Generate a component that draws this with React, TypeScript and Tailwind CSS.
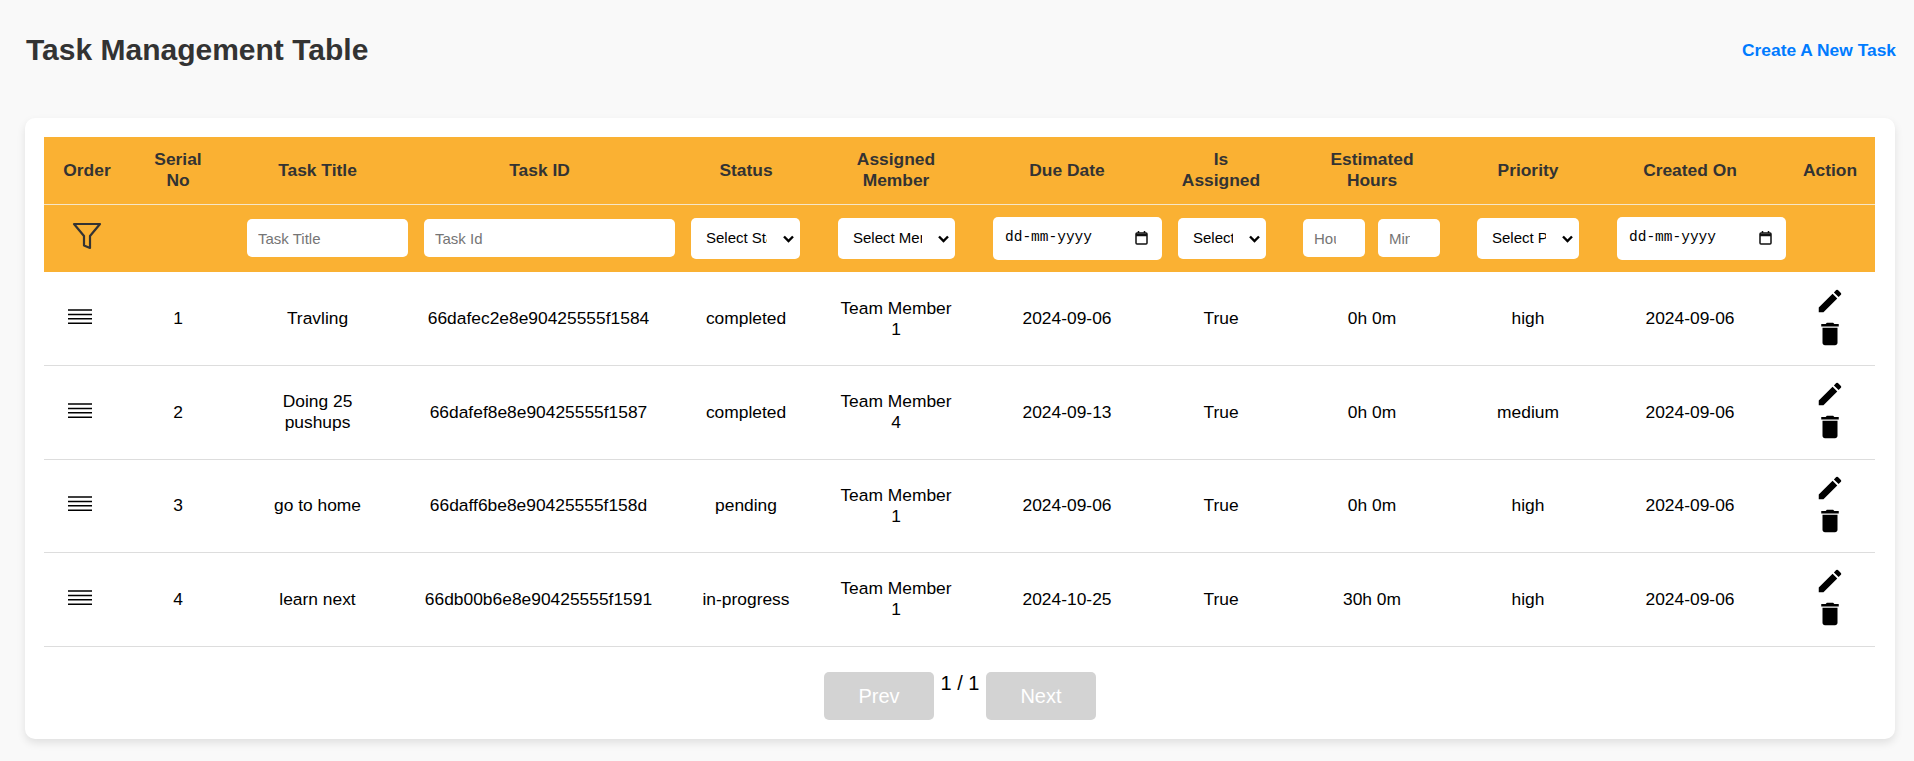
import React from 'react';
import { MdEdit, MdDelete } from 'react-icons/md';

const tasks = [
  { no: 1, title: 'Travling', id: '66dafec2e8e90425555f1584', status: 'completed', member: 'Team Member 1', due: '2024-09-06', hours: '0h 0m', priority: 'high' },
  { no: 2, title: 'Doing 25 pushups', id: '66dafef8e8e90425555f1587', status: 'completed', member: 'Team Member 4', due: '2024-09-13', hours: '0h 0m', priority: 'medium' },
  { no: 3, title: 'go to home', id: '66daff6be8e90425555f158d', status: 'pending', member: 'Team Member 1', due: '2024-09-06', hours: '0h 0m', priority: 'high' },
  { no: 4, title: 'learn next', id: '66db00b6e8e90425555f1591', status: 'in-progress', member: 'Team Member 1', due: '2024-10-25', hours: '30h 0m', priority: 'high' },
];

const inputCls = 'h-[38px] rounded-[5px] bg-white pl-[11px] text-[15px] font-normal outline-none placeholder:text-[#757575]';

const DateBox = ({ className }: { className: string }) => (
  <div className={`flex h-[43px] w-[169px] items-center justify-between rounded-[5px] bg-white pr-[14px] pl-[12px] ${className}`}>
    <span className="font-['Liberation_Mono',monospace] text-[14.5px] font-normal text-black">dd-mm-yyyy</span>
    <svg width="13" height="14" viewBox="0 0 13 14" fill="none" stroke="#111" strokeWidth="1.5">
      <rect x="1" y="2" width="11" height="11" rx="1" />
      <path d="M1 4h11" strokeWidth="2.5" />
      <path d="M3.5 0v2M9.5 0v2" />
    </svg>
  </div>
);

const FilterSelect = ({ label, className }: { label: string; className: string }) => (
  <div className={`relative ${className}`}>
    <select className="block h-[41px] w-full appearance-none rounded-[5px] bg-white pr-[33px] pl-[15px] text-[15px] font-normal text-black outline-none">
      <option>{label}</option>
    </select>
    <svg className="pointer-events-none absolute top-[17px] right-[6px]" width="11" height="8" viewBox="0 0 11 8" fill="none" stroke="#000" strokeWidth="2.4">
      <path d="M1 1.5l4.5 4.5L10 1.5" />
    </svg>
  </div>
);

const App: React.FC = () => {
  return (
    <div className="min-h-[761px] bg-[#f9f9f9] pr-[19px] pl-[25px] font-['Liberation_Sans',Arial,sans-serif] text-black">
      <div className="flex h-[118px] items-start justify-between">
        <h1 className="mt-[30px] ml-[1px] text-[30px] leading-[40px] font-bold text-[#333]">Task Management Table</h1>
        <a className="mt-[39px] mr-[-1px] text-[17.4px] leading-[22px] font-bold text-[#007bff]">Create A New Task</a>
      </div>

      <div className="h-[621px] rounded-[10px] bg-white px-[19px] pt-[19px] shadow-[0_4px_8px_rgba(0,0,0,0.1)]">
        <table className="w-[1831px] table-fixed border-collapse text-center text-[17.4px]">
          <colgroup>
            <col className="w-[101px]" />
            <col className="w-[66px]" />
            <col className="w-[213px]" />
            <col className="w-[251px]" />
            <col className="w-[142px]" />
            <col className="w-[158px]" />
            <col className="w-[184px]" />
            <col className="w-[124px]" />
            <col className="w-[178px]" />
            <col className="w-[134px]" />
            <col className="w-[190px]" />
            <col className="w-[90px]" />
          </colgroup>
          <thead className="bg-[#fab133] text-[#333]">
            <tr className="h-[67px] border-b border-[#f5e6c8] leading-[21px] font-bold">
              <th className="pr-[15px]">Order</th>
              <th>Serial<br />No</th>
              <th>Task Title</th>
              <th className="pr-[20px]">Task ID</th>
              <th>Status</th>
              <th>Assigned<br />Member</th>
              <th>Due Date</th>
              <th>Is<br />Assigned</th>
              <th>Estimated<br />Hours</th>
              <th>Priority</th>
              <th>Created On</th>
              <th>Action</th>
            </tr>
            <tr className="h-[68px]">
              <th className="pr-[15px]">
                <svg className="mx-auto mb-[5px]" width="30" height="28" viewBox="0 0 30 28" fill="none" stroke="#333" strokeWidth="2.2" strokeLinejoin="round">
                  <path d="M2 2h26L18 14v12l-6-2.5V14z" />
                </svg>
              </th>
              <th></th>
              <th><input placeholder="Task Title" className={`${inputCls} ml-[36px] block w-[161px]`} /></th>
              <th><input placeholder="Task Id" className={`${inputCls} block w-[251px]`} /></th>
              <th><FilterSelect label="Select Status" className="ml-[16px] w-[109px]" /></th>
              <th><FilterSelect label="Select Member" className="ml-[21px] w-[117px]" /></th>
              <th><DateBox className="ml-[18px]" /></th>
              <th><FilterSelect label="Select Assigned" className="ml-[19px] w-[88px]" /></th>
              <th>
                <div className="ml-[20px] flex gap-[13px]">
                  <input placeholder="Hours" className={`${inputCls} w-[62px] pr-[29px]`} />
                  <input placeholder="Minutes" className={`${inputCls} w-[62px] pr-[30px]`} />
                </div>
              </th>
              <th><FilterSelect label="Select Priority" className="ml-[16px] w-[102px]" /></th>
              <th><DateBox className="ml-[22px]" /></th>
              <th></th>
            </tr>
          </thead>
          <tbody>
            {tasks.map((t) => (
              <tr key={t.no} className="h-[93.5px] border-b border-[#ddd] leading-[21px]">
                <td>
                  <svg className="mb-[3px] ml-[24px]" width="24" height="18" viewBox="0 0 24 18" stroke="#000" strokeWidth="1.5">
                    <path d="M0 2h24M0 6.4h24M0 10.8h24M0 15.2h24" />
                  </svg>
                </td>
                <td>{t.no}</td>
                <td><div className="mx-auto w-[110px]">{t.title}</div></td>
                <td className="pr-[22px]">{t.id}</td>
                <td>{t.status}</td>
                <td><div className="mx-auto w-[118px]">{t.member}</div></td>
                <td>{t.due}</td>
                <td>True</td>
                <td>{t.hours}</td>
                <td>{t.priority}</td>
                <td>2024-09-06</td>
                <td>
                  <div className="mb-[3px] flex flex-col items-center gap-[3px]">
                    <MdEdit size={30} />
                    <MdDelete size={30} />
                  </div>
                </td>
              </tr>
            ))}
          </tbody>
        </table>

        <div className="mt-[25px] flex items-start justify-center">
          <button className="h-[48px] w-[110px] rounded-[5px] bg-[#d3d3d3] text-[20px] text-white">Prev</button>
          <span className="mx-[6.5px] text-[20px] leading-[23px] text-black">1 / 1</span>
          <button className="h-[48px] w-[110px] rounded-[5px] bg-[#d3d3d3] text-[20px] text-white">Next</button>
        </div>
      </div>
    </div>
  );
};

export default App;
